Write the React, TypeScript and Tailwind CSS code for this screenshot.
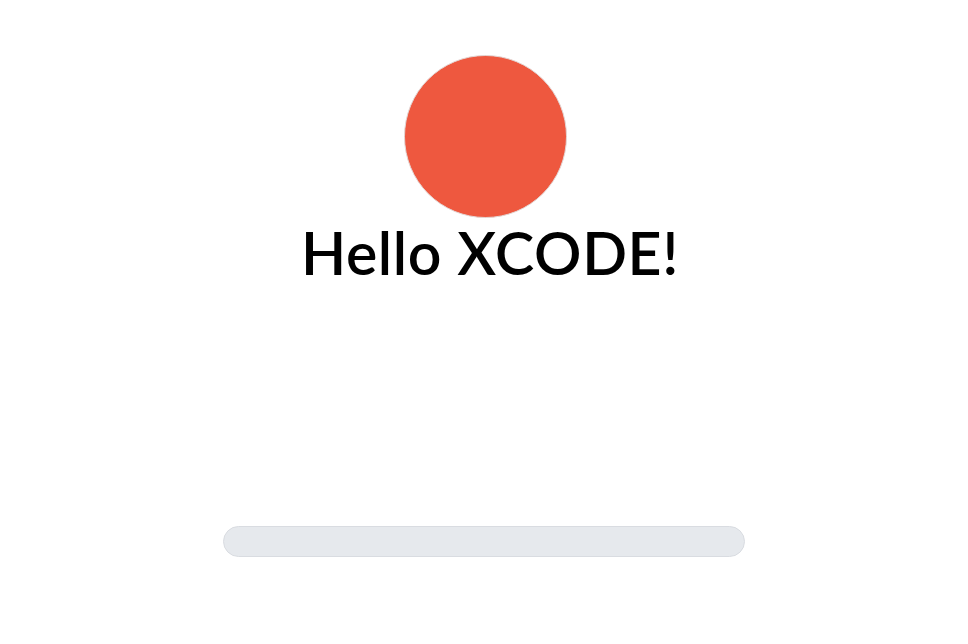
export default function App() {
  return (
    <div className="flex min-h-screen flex-col items-center bg-white pt-[55px]" style={{ fontFamily: 'Lato, "Noto Sans", sans-serif' }}>
      {/* avatar circle */}
      <div className="ml-[2px] h-[163px] w-[163px] rounded-full border border-[#e3d6d4] bg-[#ee583f]" />

      <h1 className="mt-[1px] pl-[12px] text-[59px] leading-[68px] font-semibold tracking-[0.6px] text-black">Hello XCODE!</h1>

      {/* progress track */}
      <div className="mt-[239px] h-[31px] w-[522px] rounded-full border border-[#d9dce1] bg-[#e6e9ed]" />
    </div>
  );
}
